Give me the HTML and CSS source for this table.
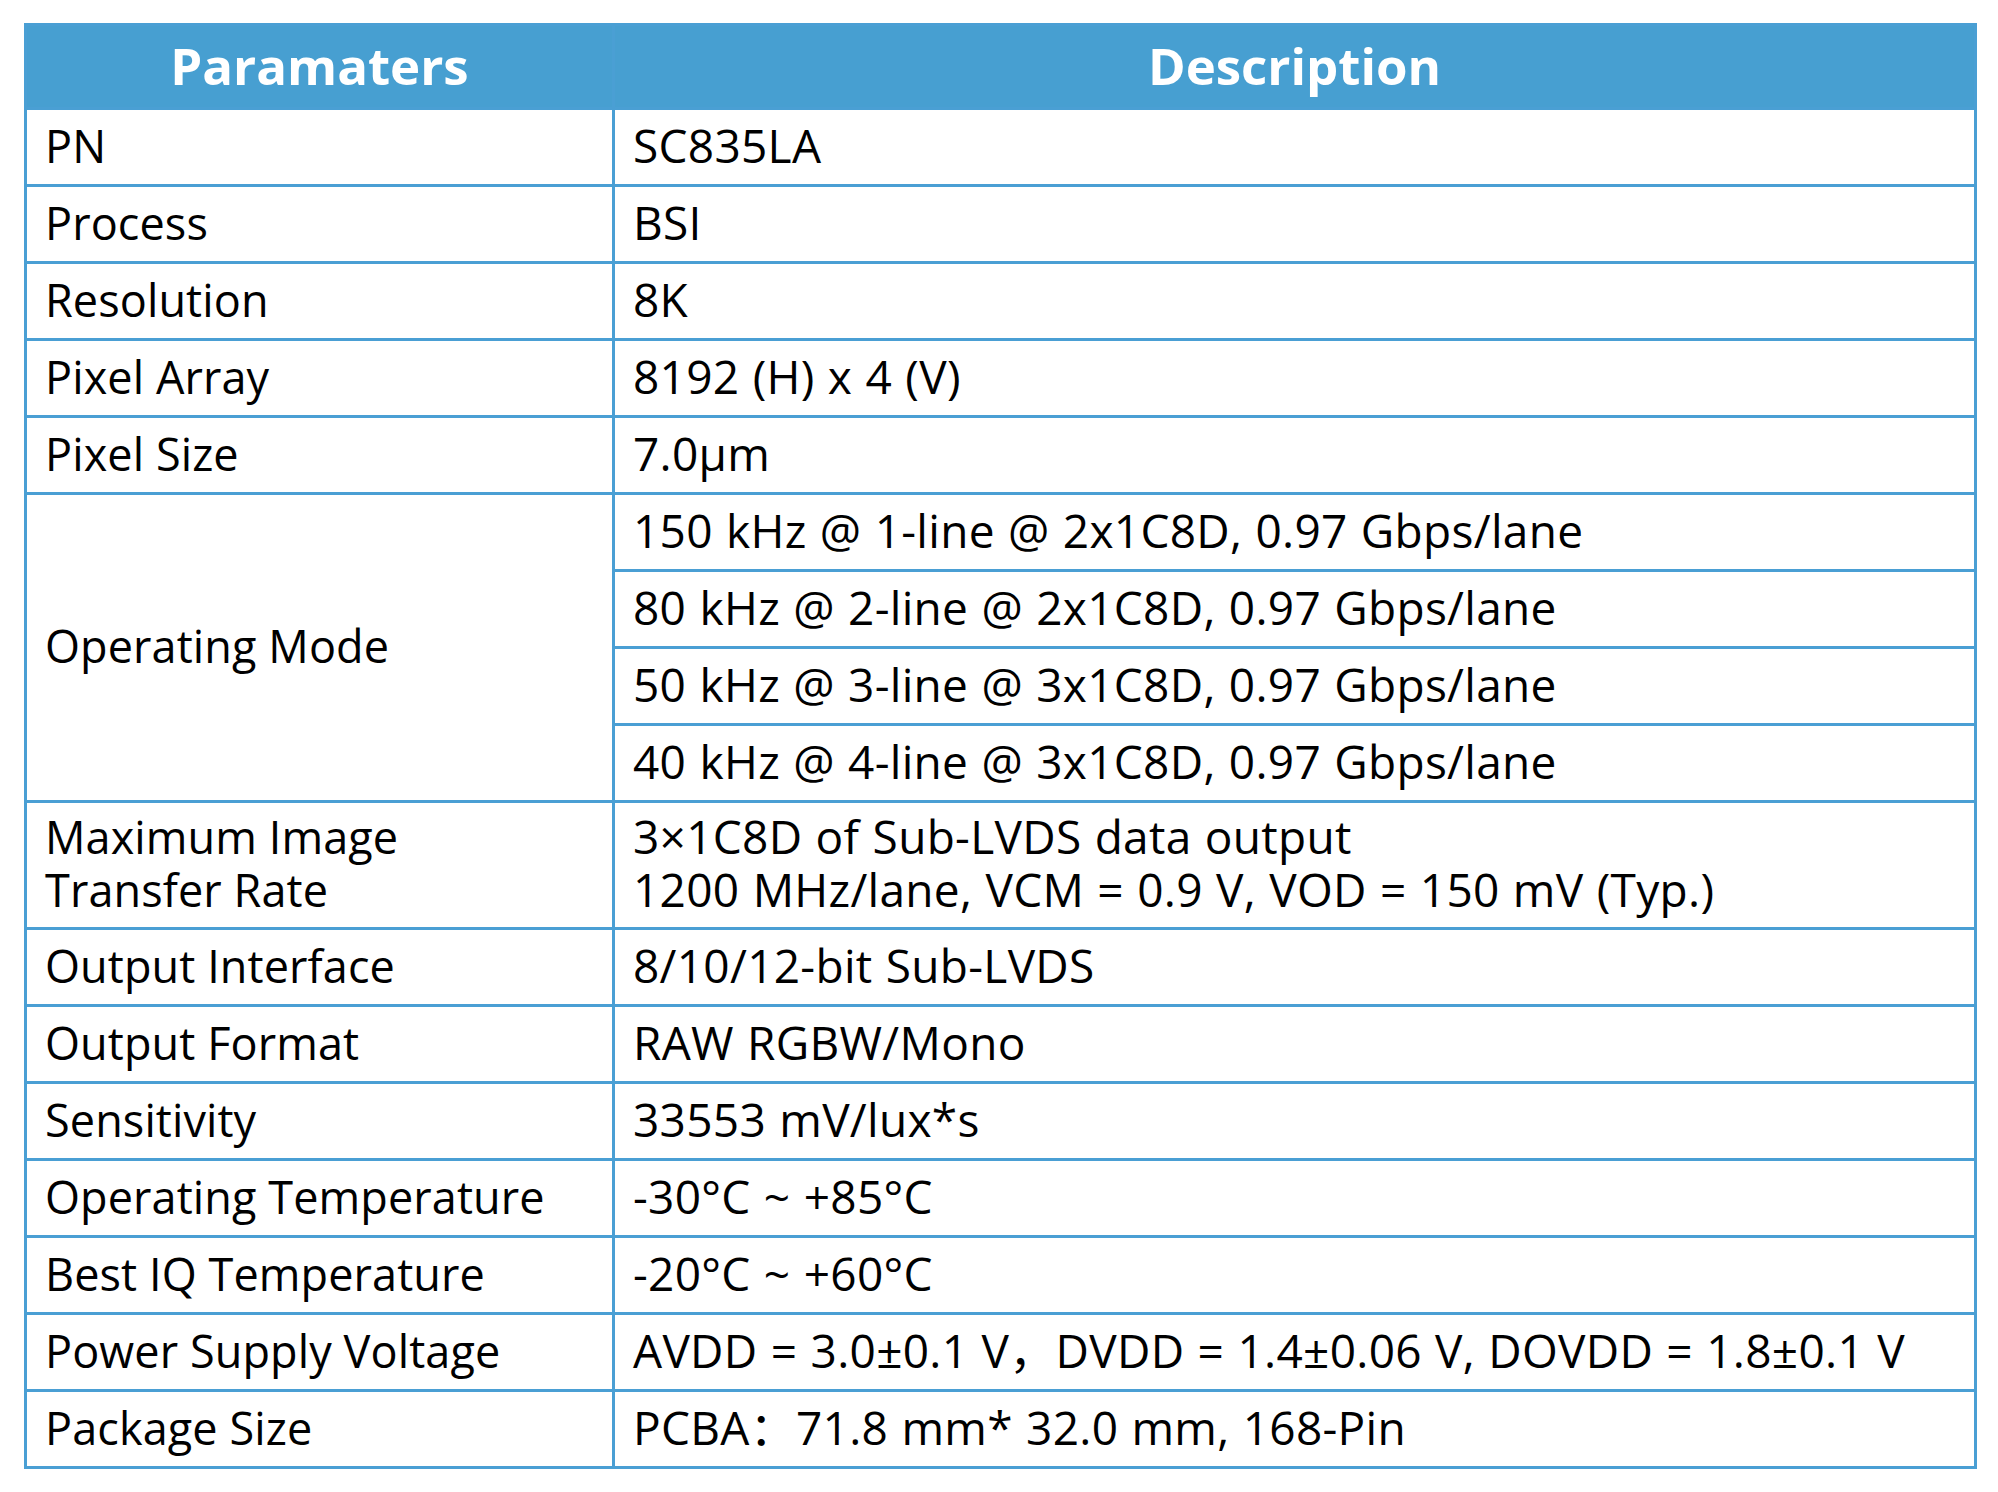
FILE: index.html
```html
<!DOCTYPE html>
<html lang="en">
<head>
<meta charset="utf-8">
<title>SC835LA Parameters</title>
<link rel="stylesheet" href="styles.css">
</head>
<body>
<table class="spec">
  <colgroup><col class="c1"><col class="c2"></colgroup>
  <thead>
    <tr class="head"><th>Paramaters</th><th>Description</th></tr>
  </thead>
  <tbody>
    <tr><td class="k">PN</td><td class="v">SC835LA</td></tr>
    <tr><td class="k">Process</td><td class="v">BSI</td></tr>
    <tr><td class="k">Resolution</td><td class="v">8K</td></tr>
    <tr><td class="k">Pixel Array</td><td class="v">8192 (H) x 4 (V)</td></tr>
    <tr><td class="k">Pixel Size</td><td class="v">7.0μm</td></tr>
    <tr><td class="k" rowspan="4">Operating Mode</td><td class="v">150 kHz @ 1-line @ 2x1C8D, 0.97 Gbps/lane</td></tr>
    <tr><td class="v">80 kHz @ 2-line @ 2x1C8D, 0.97 Gbps/lane</td></tr>
    <tr><td class="v">50 kHz @ 3-line @ 3x1C8D, 0.97 Gbps/lane</td></tr>
    <tr><td class="v">40 kHz @ 4-line @ 3x1C8D, 0.97 Gbps/lane</td></tr>
    <tr class="tall"><td class="k">Maximum Image<br>Transfer Rate</td><td class="v">3×1C8D of Sub-LVDS data output<br>1200 MHz/lane, VCM = 0.9 V, VOD = 150 mV (Typ.)</td></tr>
    <tr><td class="k">Output Interface</td><td class="v">8/10/12-bit Sub-LVDS</td></tr>
    <tr><td class="k">Output Format</td><td class="v">RAW RGBW/Mono</td></tr>
    <tr><td class="k">Sensitivity</td><td class="v">33553 mV/lux*s</td></tr>
    <tr><td class="k">Operating Temperature</td><td class="v">-30°C ~ +85°C</td></tr>
    <tr><td class="k">Best IQ Temperature</td><td class="v">-20°C ~ +60°C</td></tr>
    <tr><td class="k">Power Supply Voltage</td><td class="v">AVDD = 3.0±0.1 V，DVDD = 1.4±0.06 V, DOVDD = 1.8±0.1 V</td></tr>
    <tr><td class="k">Package Size</td><td class="v">PCBA：71.8 mm* 32.0 mm, 168-Pin</td></tr>
  </tbody>
</table>
</body>
</html>
```

FILE: styles.css
```css
html, body {
  margin: 0;
  background: #ffffff;
}
body {
  padding: 23px 24px 0 24px;
  font-family: "Open Sans", "Noto Sans CJK SC", sans-serif;
  color: #000000;
}
.spec {
  width: 1950px;
  border-collapse: collapse;
  table-layout: fixed;
  border: 3px solid #4a9fd4;
}
.c1 { width: 588px; }
.c2 { width: 1362px; }
.head th {
  background: #479fd1;
  color: #ffffff;
  font-weight: 700;
  font-size: 51px;
  height: 78px;
  padding: 0 0 3px 0;
  text-align: center;
  vertical-align: middle;
  line-height: 1;
  border: 3px solid #4a9fd4;
  border-top: 0;
}
.spec td {
  border: 3px solid #4a9fd4;
  height: 70px;
  padding: 0 0 4px 18px;
  line-height: 53px;
  vertical-align: middle;
  white-space: nowrap;
}
.spec td.k {
  font-size: 45px;
  letter-spacing: 0.1px;
}
.spec td.v {
  font-size: 46px;
  letter-spacing: 0.3px;
  word-spacing: 1px;
}
.spec tr.tall td {
  height: 120px;
}
```
